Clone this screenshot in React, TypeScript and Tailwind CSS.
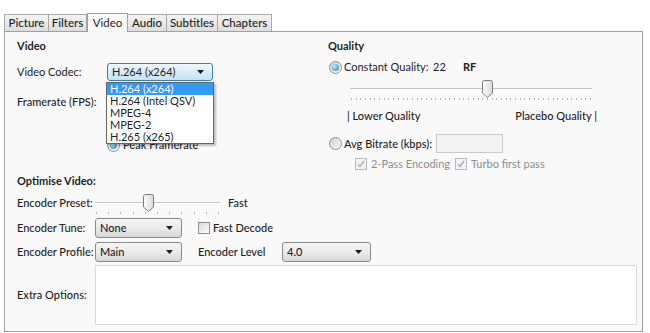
import React from "react";

const Arrow = () => (
  <svg width="7" height="4" viewBox="0 0 7 4">
    <path d="M0 0h7L3.5 4z" fill="#1a1a1a" />
  </svg>
);

const Combo = ({ value, className, focused }: { value: string; className: string; focused?: boolean }) => (
  <div
    className={`flex shrink-0 items-center justify-between rounded-[3px] border pl-[4px] pr-[8px] ${className} ${
      focused
        ? "border-[#3c7fb1] bg-linear-to-b from-[#eef7fd] to-[#c4e2f5]"
        : "border-[#8a8a8a] bg-linear-to-b from-[#f4f4f4] via-[#ebebeb] to-[#d6d6d6]"
    }`}
  >
    <span>{value}</span>
    <Arrow />
  </div>
);

const Radio = ({ checked }: { checked?: boolean }) => (
  <span className="flex h-[13px] w-[13px] shrink-0 items-center justify-center rounded-full border border-[#8e8f8f] bg-linear-to-br from-[#cfcfcf] to-[#fbfbfb]">
    {checked && <span className="h-[7px] w-[7px] rounded-full bg-[radial-gradient(circle_at_35%_35%,#b6ecff,#1b7fc6)]" />}
  </span>
);

const Check = ({ checked, disabled }: { checked?: boolean; disabled?: boolean }) => (
  <span
    className={`flex h-[12px] w-[12px] shrink-0 items-center justify-center border ${
      disabled ? "border-[#b8b8b8] bg-[#f2f2f2]" : "border-[#8e8f8f] bg-linear-to-br from-[#dcdcdc] to-[#fbfbfb]"
    }`}
  >
    {checked && (
      <svg width="8" height="8" viewBox="0 0 8 8">
        <path d="M1 4.2 3 6.5 7 1" fill="none" stroke={disabled ? "#9fb3c6" : "#1c4a7e"} strokeWidth="1.4" />
      </svg>
    )}
  </span>
);

const Thumb = () => (
  <svg width="11" height="18" viewBox="0 0 11 18">
    <defs>
      <linearGradient id="tg" x1="0" y1="0" x2="1" y2="0">
        <stop offset="0" stopColor="#fdfdfd" />
        <stop offset="1" stopColor="#d9d9d9" />
      </linearGradient>
    </defs>
    <path d="M0.5 2.5a2 2 0 0 1 2-2h6a2 2 0 0 1 2 2v10.5l-5 4.5-5-4.5z" fill="url(#tg)" stroke="#7a7a7a" />
  </svg>
);

const Slider = ({ width, thumbAt, ticks, trackY }: { width: number; thumbAt: number; ticks: number; trackY: number }) => (
  <div className="relative h-full" style={{ width }}>
    <div className="absolute left-0 right-0 h-[2px] border-b border-white bg-[#c4c4c4]" style={{ top: trackY }} />
    <div className="absolute top-0" style={{ left: thumbAt }}>
      <Thumb />
    </div>
    <svg className="absolute left-0" style={{ top: 18 }} width={width} height="3">
      {Array.from({ length: ticks }).map((_, i) => {
        const x = Math.round(1 + (i * (width - 3)) / (ticks - 1)) + 0.5;
        return <line key={i} x1={x} x2={x} y1="0" y2="2" stroke="#b4b4b4" strokeWidth="1" />;
      })}
    </svg>
  </div>
);

const tabs = [
  { name: "Picture", w: "w-[45px]" },
  { name: "Filters", w: "w-[39px]" },
  { name: "Video", w: "w-[41px]", active: true },
  { name: "Audio", w: "w-[40px]" },
  { name: "Subtitles", w: "w-[52px]" },
  { name: "Chapters", w: "w-[55px]" },
];

const codecs = ["H.264 (x264)", "H.264 (Intel QSV)", "MPEG-4", "MPEG-2", "H.265 (x265)"];

export default function App() {
  return (
    <div className="h-[333px] w-[650px] overflow-hidden whitespace-nowrap bg-white font-['Lato',sans-serif] text-[11px] leading-[14px] text-[#1e1e1e]">
      <div className="flex items-end pl-[4px] pt-[13px] text-[11.5px]">
        {tabs.map((t) =>
          t.active ? (
            <div
              key={t.name}
              className={`relative z-10 -mb-px flex h-[19px] items-center justify-center border border-b-0 border-[#a0a0a0] bg-[#f9f9f9] ${t.w}`}
            >
              {t.name}
            </div>
          ) : (
            <div
              key={t.name}
              className={`-ml-px flex h-[17px] items-center justify-center border border-b-0 border-[#a9a9a9] bg-linear-to-b from-[#f3f3f3] to-[#dedede] font-medium first:ml-0 ${t.w}`}
            >
              {t.name}
            </div>
          )
        )}
      </div>

      <div className="ml-[4px] h-[301px] w-[639px] border border-[#a0a0a0] bg-[#f9f9f9] pl-[12px]">
        <div className="flex h-[140px]">
          {/* left column */}
          <div className="flex w-[311px] shrink-0 flex-col">
            <div className="mt-[7px] h-[14px] font-bold">Video</div>
            <div className="mt-[10px] flex h-[18px] items-center">
              <span className="w-[90px] shrink-0">Video Codec:</span>
              <div className="relative">
                <Combo value="H.264 (x264)" className="h-[18px] w-[106px]" focused />
                <div className="absolute left-[-1px] top-[19px] z-20 w-[108px] border border-[#646464] bg-white shadow-[2px_2px_2px_rgba(0,0,0,0.25)]">
                  {codecs.map((c, i) => (
                    <div
                      key={c}
                      className={`h-[12px] pl-[3px] leading-[12px] ${i === 0 ? "bg-[#3399ff] text-white" : ""}`}
                    >
                      {c}
                    </div>
                  ))}
                </div>
              </div>
            </div>
            <div className="mt-[12px] flex h-[18px] items-center">
              <span className="w-[90px] shrink-0 font-medium">Framerate (FPS):</span>
            </div>
            <div className="ml-[90px] mt-[27px] flex h-[14px] items-center gap-[3px]">
              <Radio checked />
              <span className="font-medium">Peak Framerate</span>
            </div>
          </div>

          {/* right column */}
          <div className="flex flex-col">
            <div className="mt-[7px] h-[14px] font-bold">Quality</div>
            <div className="mt-[7px] flex h-[14px] items-center">
              <span className="ml-[1px]">
                <Radio checked />
              </span>
              <span className="ml-[2px] w-[89px] shrink-0">Constant Quality:</span>
              <span className="w-[30px] shrink-0">22</span>
              <span className="font-bold">RF</span>
            </div>
            <div className="ml-[22px] mt-[6px] h-[20px]">
              <Slider width={242} thumbAt={132} ticks={52} trackY={8} />
            </div>
            <div className="ml-[19px] mt-[9px] flex h-[14px] w-[250px] justify-between font-medium">
              <span>| Lower Quality</span>
              <span>Placebo Quality |</span>
            </div>
            <div className="mt-[11px] flex h-[19px] items-center">
              <span className="ml-[1px]">
                <Radio />
              </span>
              <span className="ml-[2px] w-[90px] shrink-0 font-medium">Avg Bitrate (kbps):</span>
              <div className="ml-[2px] h-[19px] w-[67px] shrink-0 border border-[#c9c9c9] bg-[#f3f3f3]" />
            </div>
            <div className="ml-[27px] mt-[4px] flex h-[14px] items-center text-[#8d8d8d]">
              <div className="flex w-[100px] shrink-0 items-center gap-[4px]">
                <Check checked disabled />
                <span>2-Pass Encoding</span>
              </div>
              <div className="flex items-center gap-[4px]">
                <Check checked disabled />
                <span>Turbo first pass</span>
              </div>
            </div>
          </div>
        </div>

        {/* optimise */}
        <div className="flex flex-col">
          <div className="mt-[2px] h-[14px] font-bold">Optimise Video:</div>
          <div className="mt-[6px] flex h-[18px] items-center font-medium">
            <span className="w-[78px] shrink-0">Encoder Preset:</span>
            <div className="h-[18px]">
              <Slider width={125} thumbAt={48} ticks={11} trackY={8} />
            </div>
            <span className="ml-[8px]">Fast</span>
          </div>
          <div className="mt-[6px] flex h-[20px] items-center font-medium">
            <span className="w-[78px] shrink-0">Encoder Tune:</span>
            <Combo value="None" className="h-[20px] w-[87px]" />
            <span className="ml-[16px]">
              <Check />
            </span>
            <span className="ml-[3px]">Fast Decode</span>
          </div>
          <div className="mt-[4px] flex h-[20px] items-center font-medium">
            <span className="w-[78px] shrink-0">Encoder Profile:</span>
            <Combo value="Main" className="h-[20px] w-[87px]" />
            <span className="ml-[16px] w-[84px] shrink-0">Encoder Level</span>
            <Combo value="4.0" className="h-[20px] w-[89px]" />
          </div>
          <div className="mt-[3px] flex h-[60px] items-center font-medium">
            <span className="w-[78px] shrink-0">Extra Options:</span>
            <div className="h-[60px] w-[542px] border border-[#dadada] bg-white" />
          </div>
        </div>
      </div>
    </div>
  );
}
